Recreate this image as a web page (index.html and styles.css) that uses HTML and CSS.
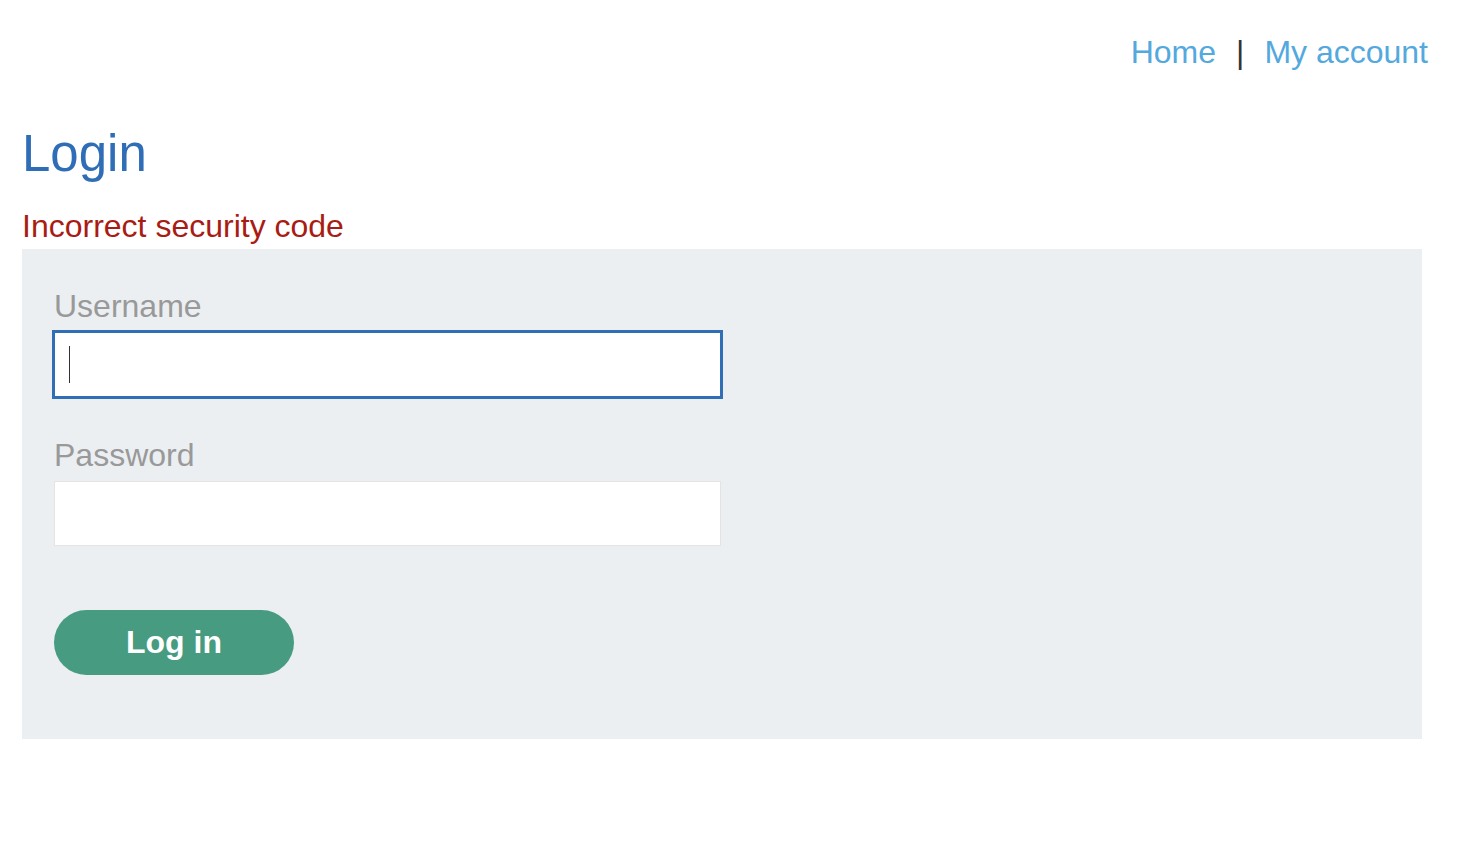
FILE: index.html
```html
<!DOCTYPE html>
<html lang="en">
<head>
  <meta charset="UTF-8" />
  <title>Login</title>
  <link rel="stylesheet" href="styles.css">
</head>

<body>
  <!-- Top nav -->
  <div class="top-links">
    <a href="/">Home</a>
    <span class="sep">|</span>
    <a href="/my-account">My account</a>
  </div>

  <div class="page">
    <h1>Login</h1>
    <p class="error">Incorrect security code</p>

    <!-- Login form -->
    <form class="login-form" method="POST" action="/login">
      <label class="field-label" for="username">Username</label>
      <div class="input-wrap">
        <input class="text-input focused" type="text" id="username" name="username">
        <span class="caret"></span>
      </div>

      <label class="field-label" for="password">Password</label>
      <div class="input-wrap">
        <input class="text-input" type="password" id="password" name="password">
      </div>

      <button class="button" type="submit">Log in</button>
    </form>
  </div>
</body>
</html>
```

FILE: styles.css
```css
* {
  margin: 0;
  padding: 0;
  box-sizing: border-box;
}
body {
  background-color: #fff;
  color: #333;
  font-family: "Liberation Sans", Arial, sans-serif;
}
/* Top nav */
.top-links {
  display: flex;
  justify-content: flex-end;
  align-items: center;
  gap: 20px;
  padding: 32px 32px 0 0;
  font-size: 32px;
  line-height: 40px;
}
.top-links a {
  color: #53a9de;
  text-decoration: none;
}
.top-links .sep {
  color: #333;
}
/* Main */
.page {
  padding: 0 22px;
}
h1 {
  margin-top: 52px;
  font-size: 51px;
  line-height: 60px;
  font-weight: normal;
  color: #2f6eb6;
}
.error {
  margin-top: 22px;
  margin-bottom: 3px;
  font-size: 32px;
  line-height: 40px;
  color: #a81c14;
}
/* Form panel */
.login-form {
  max-width: 1400px;
  background-color: #ebeff2;
  padding: 37px 32px 64px 32px;
}
.field-label {
  display: block;
  font-size: 32px;
  line-height: 40px;
  color: #999;
}
.input-wrap {
  position: relative;
  width: 667px;
  margin: 6px 0 38px 0;
}
.text-input {
  display: block;
  width: 667px;
  height: 65px;
  background-color: #fff;
  border: 1px solid #e4e4e4;
  font-size: 32px;
  font-family: inherit;
  outline: none;
}
.text-input.focused {
  border-color: #306eb6;
  box-shadow: 0 0 0 2px #306eb6;
}
.caret {
  position: absolute;
  left: 15px;
  top: 14px;
  width: 1px;
  height: 37px;
  background-color: #333;
}
.button {
  display: block;
  margin-top: 64px;
  width: 240px;
  height: 65px;
  border: none;
  border-radius: 33px;
  background-color: #479b80;
  color: #fff;
  font-family: inherit;
  font-size: 32px;
  font-weight: bold;
  cursor: pointer;
}
```
